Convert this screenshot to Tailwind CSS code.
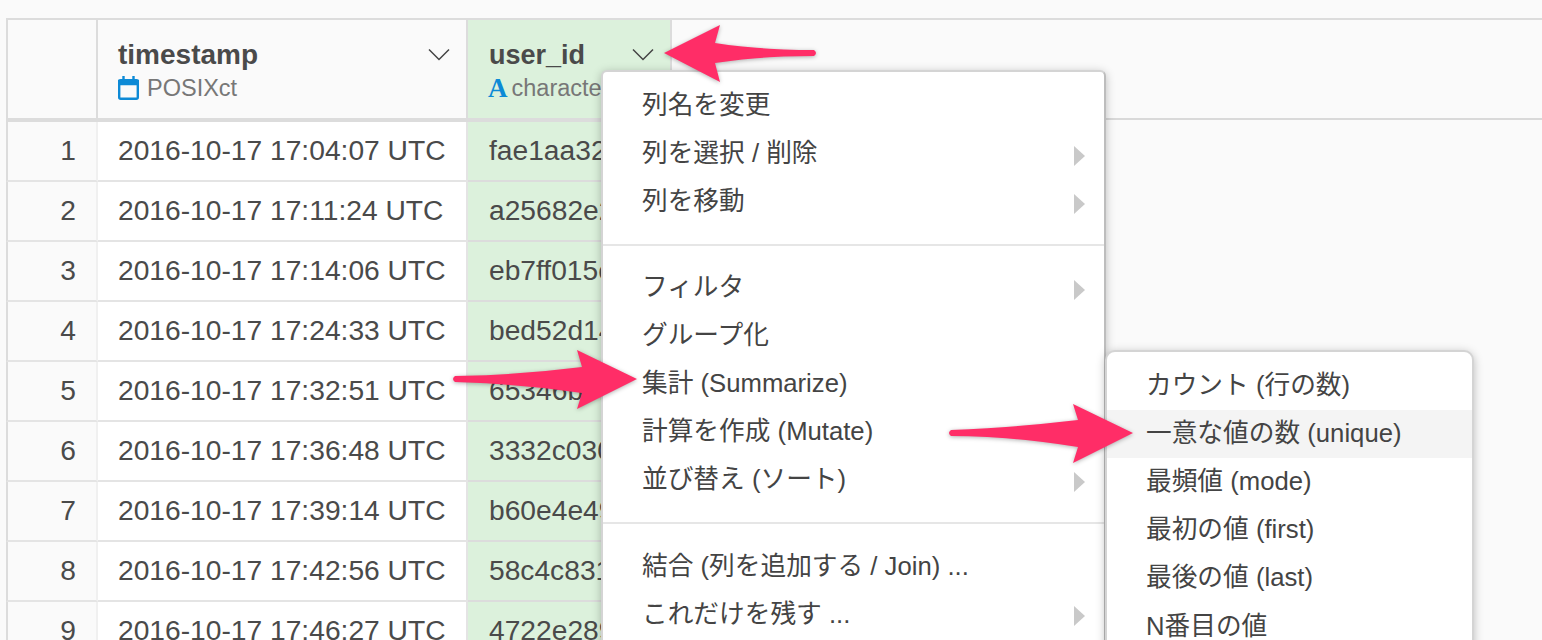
<!DOCTYPE html>
<html lang="en">
<head>
    <meta charset="UTF-8">
    <title>Column menu</title>
    <script src="https://cdn.jsdelivr.net/npm/@tailwindcss/browser@4"></script>
</head>
<body class="bg-[#fafafa] h-[640px] overflow-hidden font-['Liberation_Sans','Noto_Sans_CJK_JP',sans-serif] text-[#4a4a4a]">
    <div class="relative h-[640px] overflow-hidden">
        <!-- Header band -->
        <div class="pt-[18px] pl-[6px]">
            <div class="flex h-[104px] border-t-2 border-[#dcdcdc]">
                <div class="w-[92px] shrink-0 border-l-2 border-r-2 border-b-4 border-[#dcdcdc]"></div>
                <div class="w-[370px] shrink-0 border-r-2 border-b-4 border-[#dcdcdc] pl-[20px] pr-[16px] pt-[20px] flex justify-between">
                    <div>
                        <div class="text-[28px] leading-[30px] font-bold">timestamp</div>
                        <div class="flex items-center gap-[8px] mt-[5px] text-[#777] text-[23.5px] leading-[26px]">
                            <svg width="21" height="24" viewBox="0 0 21 24" fill="none" stroke="#0d8ad6" stroke-width="2.4"><rect x="1.2" y="4.2" width="18.6" height="18.6" rx="1.5"/><path d="M1.2 5h18.6v3H1.2z" fill="#0d8ad6"/><path d="M5.5 0v5M15.5 0v5"/></svg>
                            <span>POSIXct</span>
                        </div>
                    </div>
                    <svg class="mt-[8px]" width="22" height="14" viewBox="0 0 22 14" fill="none" stroke="#444" stroke-width="1.5"><path d="M1 1.5l10 10 10-10"/></svg>
                </div>
                <div class="w-[204px] shrink-0 bg-[#dcf1dc] border-r-2 border-b-4 border-[#dcdcdc] pl-[21px] pt-[20px] flex justify-between pr-[16px]">
                    <div>
                        <div class="text-[27px] leading-[30px] font-bold">user_id</div>
                        <div class="flex items-center gap-[4px] mt-[5px] text-[#777] text-[23.5px] leading-[26px] whitespace-nowrap">
                            <span class="-ml-[1px] font-['Liberation_Serif'] font-bold text-[#0d8ad6] text-[27px]">A</span>
                            <span>character</span>
                        </div>
                    </div>
                    <svg class="mt-[8px]" width="22" height="14" viewBox="0 0 22 14" fill="none" stroke="#444" stroke-width="1.5"><path d="M1 1.5l10 10 10-10"/></svg>
                </div>
                <div class="flex-1 self-start h-[100px] border-b-2 border-[#d9d9d9]"></div>
            </div>
        </div>

        <!-- Data rows -->
        <div id="rows" class="pl-[6px]"></div>

        <!-- Column menu -->
        <div class="absolute left-[601px] top-[70px] w-[505px] h-[600px] bg-white border-2 border-[#d4d4d4] border-r-[#bdbdbd] rounded-t-[6px] shadow-[0_2px_10px_rgba(0,0,0,0.25)] text-[25.7px] text-[#444]">
            <div class="pt-[10px]">
                <div class="h-[48px] pb-[2px] flex items-center pl-[39px]">列名を変更</div>
                <div class="h-[48px] pb-[2px] flex items-center justify-between pl-[39px] pr-[19px]">列を選択 / 削除<svg class="mt-[6px]" width="11" height="20" viewBox="0 0 11 20" fill="#c9c9c9"><path d="M0 0l11 10L0 20z"/></svg></div>
                <div class="h-[48px] pb-[2px] flex items-center justify-between pl-[39px] pr-[19px]">列を移動<svg class="mt-[6px]" width="11" height="20" viewBox="0 0 11 20" fill="#c9c9c9"><path d="M0 0l11 10L0 20z"/></svg></div>
            </div>
            <div class="mt-[18px] border-t-2 border-[#e6e6e6] pt-[18px]">
                <div class="h-[48px] pb-[2px] flex items-center justify-between pl-[39px] pr-[19px]">フィルタ<svg class="mt-[6px]" width="11" height="20" viewBox="0 0 11 20" fill="#c9c9c9"><path d="M0 0l11 10L0 20z"/></svg></div>
                <div class="h-[48px] pb-[2px] flex items-center pl-[39px]">グループ化</div>
                <div class="h-[48px] pb-[2px] flex items-center pl-[39px]">集計 (Summarize)</div>
                <div class="h-[48px] pb-[2px] flex items-center pl-[39px]">計算を作成 (Mutate)</div>
                <div class="h-[48px] pb-[2px] flex items-center justify-between pl-[39px] pr-[19px]">並び替え (ソート)<svg class="mt-[6px]" width="11" height="20" viewBox="0 0 11 20" fill="#c9c9c9"><path d="M0 0l11 10L0 20z"/></svg></div>
            </div>
            <div class="mt-[18px] border-t-2 border-[#e6e6e6] pt-[18px]">
                <div class="h-[48px] flex items-center pl-[39px]">結合 (列を追加する / Join) ...</div>
                <div class="h-[48px] flex items-center justify-between pl-[39px] pr-[19px]">これだけを残す ...<svg class="mt-[4px]" width="11" height="20" viewBox="0 0 11 20" fill="#c9c9c9"><path d="M0 0l11 10L0 20z"/></svg></div>
            </div>
        </div>

        <!-- Summarize submenu -->
        <div class="absolute left-[1105px] top-[350px] w-[369px] h-[320px] bg-white border-2 border-[#d4d4d4] rounded-t-[10px] shadow-[0_2px_10px_rgba(0,0,0,0.25)] text-[25.7px] text-[#444] pt-[10px]">
            <div class="h-[48px] pb-[2px] flex items-center pl-[39px]">カウント (行の数)</div>
            <div class="h-[48px] pb-[2px] flex items-center pl-[39px] bg-[#f4f4f4]">一意な値の数 (unique)</div>
            <div class="h-[48px] pb-[2px] flex items-center pl-[39px]">最頻値 (mode)</div>
            <div class="h-[48px] pb-[2px] flex items-center pl-[39px]">最初の値 (first)</div>
            <div class="h-[48px] pb-[2px] flex items-center pl-[39px]">最後の値 (last)</div>
            <div class="h-[48px] flex items-center pl-[39px]">N番目の値</div>
        </div>

        <!-- Annotation arrows -->
        <svg class="absolute left-0 top-0 pointer-events-none drop-shadow-[0_1px_2px_rgba(0,0,0,0.3)]" width="1542" height="640" viewBox="0 0 1542 640" fill="#ff2d67">
            <path d="M664 53L720 25L715 43Q760 50 814 50Q818 53 814 56Q760 56 715 63L720 82Z"/>
            <path d="M637 379L577 350L582 367Q520 375 455 376Q451 379 455 382Q520 384 582 393L577 409Z"/>
            <path d="M1133 433L1073 404L1078 420Q1010 428 951 430Q947 433 951 436Q1010 436 1078 447L1073 463Z"/>
        </svg>
    </div>

    <script>
        const rows = [
            ['2016-10-17 17:04:07 UTC', 'fae1aa32c1'],
            ['2016-10-17 17:11:24 UTC', 'a25682e2c1'],
            ['2016-10-17 17:14:06 UTC', 'eb7ff015c1'],
            ['2016-10-17 17:24:33 UTC', 'bed52d14c1'],
            ['2016-10-17 17:32:51 UTC', '65346b0fc1'],
            ['2016-10-17 17:36:48 UTC', '3332c030c1'],
            ['2016-10-17 17:39:14 UTC', 'b60e4e49c1'],
            ['2016-10-17 17:42:56 UTC', '58c4c831c1'],
            ['2016-10-17 17:46:27 UTC', '4722e289c1']
        ];

        document.getElementById('rows').innerHTML = rows.map((row, i) => `
            <div class="flex h-[60px] text-[28.2px]">
                <div class="w-[92px] shrink-0 pb-[2px] border-l-2 border-r-2 border-b-2 border-l-[#dcdcdc] border-r-[#f0f0f0] border-b-[#e4e4e4] flex items-center justify-end pr-[20px]">${i + 1}</div>
                <div class="w-[370px] shrink-0 pb-[2px] bg-white border-r-2 border-b-2 border-[#e4e4e4] flex items-center pl-[20px] whitespace-nowrap">${row[0]}</div>
                <div class="w-[204px] shrink-0 pb-[2px] bg-[#dcf1dc] border-b-2 border-[#dcdcdc] flex items-center pl-[21px] overflow-hidden whitespace-nowrap">${row[1]}</div>
            </div>
        `).join('');
    </script>
</body>
</html>
